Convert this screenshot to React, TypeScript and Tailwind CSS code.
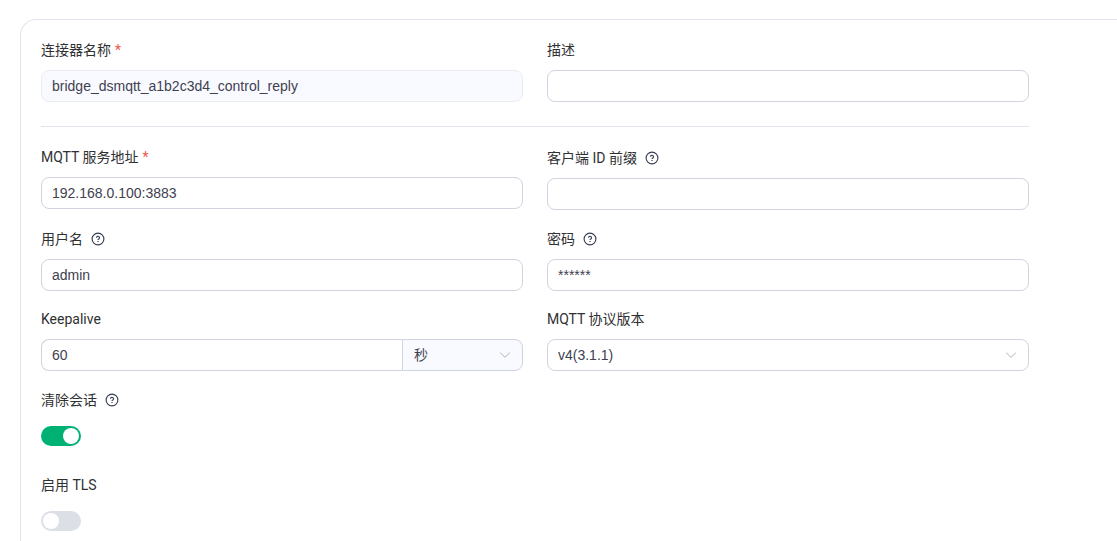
import { useId, useState } from "react";
import type { ReactNode } from "react";

const controlClass =
  "block h-8 w-full rounded-lg border border-[#d0d3e0] bg-white px-2.5 text-sm text-[#3f4150] outline-none focus:border-[#00b173]";

function HelpIcon() {
  return (
    <svg viewBox="0 0 14 14" className="size-3.5" fill="none" stroke="#343a50" aria-hidden="true">
      <circle cx="7" cy="7" r="5.9" strokeWidth="1.1" />
      <path d="M5.5 5.8a1.5 1.5 0 1 1 2.3 1.25C7.2 7.4 7 7.6 7 8.1" strokeWidth="1.15" />
      <path d="M7 8.9v1.1" strokeWidth="1.2" />
    </svg>
  );
}

function ArrowIcon() {
  return (
    <svg
      viewBox="0 0 14 14"
      className="pointer-events-none absolute top-1/2 right-[11px] size-3.5 -translate-y-1/2"
      fill="none"
      stroke="#b0b3bd"
      aria-hidden="true"
    >
      <path d="M2.4 4.9 7 9.3l4.6-4.4" strokeWidth="1" strokeLinecap="round" strokeLinejoin="round" />
    </svg>
  );
}

type FieldProps = {
  label: string;
  required?: boolean;
  help?: boolean;
  children: (id: string) => ReactNode;
};

function Field({ label, required, help, children }: FieldProps) {
  const id = useId();
  return (
    <div className="min-w-0">
      <div className={help ? "mb-2.5 flex h-[21px] items-center gap-2" : "mb-2.5 flex h-5 items-center gap-1"}>
        <label htmlFor={id} className="font-['Roboto','Noto_Sans_CJK_SC',sans-serif] text-sm leading-5 text-[#303133]">
          {label}
        </label>
        {required && <span className="font-['Roboto',sans-serif] text-sm leading-5 text-[#f5544a]">*</span>}
        {help && <HelpIcon />}
      </div>
      {children(id)}
    </div>
  );
}

function TextField({
  value = "",
  disabled,
  ...field
}: Omit<FieldProps, "children"> & { value?: string; disabled?: boolean }) {
  return (
    <Field {...field}>
      {(id) => (
        <input
          id={id}
          type="text"
          defaultValue={value}
          disabled={disabled}
          className={`${controlClass} disabled:border-[#ebecf2] disabled:bg-[#f9faff]`}
        />
      )}
    </Field>
  );
}

function SwitchField({ initial, ...field }: Omit<FieldProps, "children"> & { initial: boolean }) {
  const [on, setOn] = useState(initial);
  return (
    <Field {...field}>
      {(id) => (
        <div className="flex h-8 items-center">
          <button
            id={id}
            type="button"
            role="switch"
            aria-checked={on}
            onClick={() => setOn(!on)}
            className={`flex h-5 w-10 items-center rounded-full px-0.5 ${on ? "justify-end bg-[#00b173]" : "justify-start bg-[#dcdfe6]"}`}
          >
            <span className="size-4 rounded-full bg-white" />
          </button>
        </div>
      )}
    </Field>
  );
}

export default function App() {
  return (
    <main className="bg-white pt-[19px] pl-5 font-['Liberation_Sans','Noto_Sans_CJK_SC',sans-serif]">
      <form className="rounded-tl-2xl border-t border-l border-[#e1e4f0] px-5 pt-5 pb-1">
        <div className="max-w-[988px]">
          <div className="grid grid-cols-2 gap-x-6">
            <TextField label="连接器名称" required disabled value="bridge_dsmqtt_a1b2c3d4_control_reply" />
            <TextField label="描述" />
          </div>
          <hr className="mt-6 mb-5 border-t border-[#e1e4ec]" />
          <div className="grid grid-cols-2 gap-x-6 gap-y-[18px]">
            <TextField label="MQTT 服务地址" required value="192.168.0.100:3883" />
            <TextField label="客户端 ID 前缀" help />
            <TextField label="用户名" help value="admin" />
            <TextField label="密码" help value="******" />
            <Field label="Keepalive">
              {(id) => (
                <div className="flex">
                  <input
                    id={id}
                    type="text"
                    inputMode="numeric"
                    defaultValue="60"
                    className="h-8 min-w-0 flex-1 rounded-l-lg border border-r-0 border-[#d0d3e0] bg-white px-2.5 text-sm text-[#3f4150] outline-none"
                  />
                  <div className="relative w-[121px]">
                    <select
                      aria-label="单位"
                      className="h-8 w-full appearance-none rounded-r-lg border border-[#d0d3e0] bg-[#f9faff] px-[11px] text-sm text-[#3f4150] outline-none"
                    >
                      <option>秒</option>
                    </select>
                    <ArrowIcon />
                  </div>
                </div>
              )}
            </Field>
            <Field label="MQTT 协议版本">
              {(id) => (
                <div className="relative">
                  <select id={id} className={`${controlClass} appearance-none`}>
                    <option>v4(3.1.1)</option>
                  </select>
                  <ArrowIcon />
                </div>
              )}
            </Field>
          </div>
          <div className="mt-[18px] grid gap-[23px]">
            <SwitchField label="清除会话" help initial={true} />
            <SwitchField label="启用 TLS" initial={false} />
          </div>
        </div>
      </form>
    </main>
  );
}
